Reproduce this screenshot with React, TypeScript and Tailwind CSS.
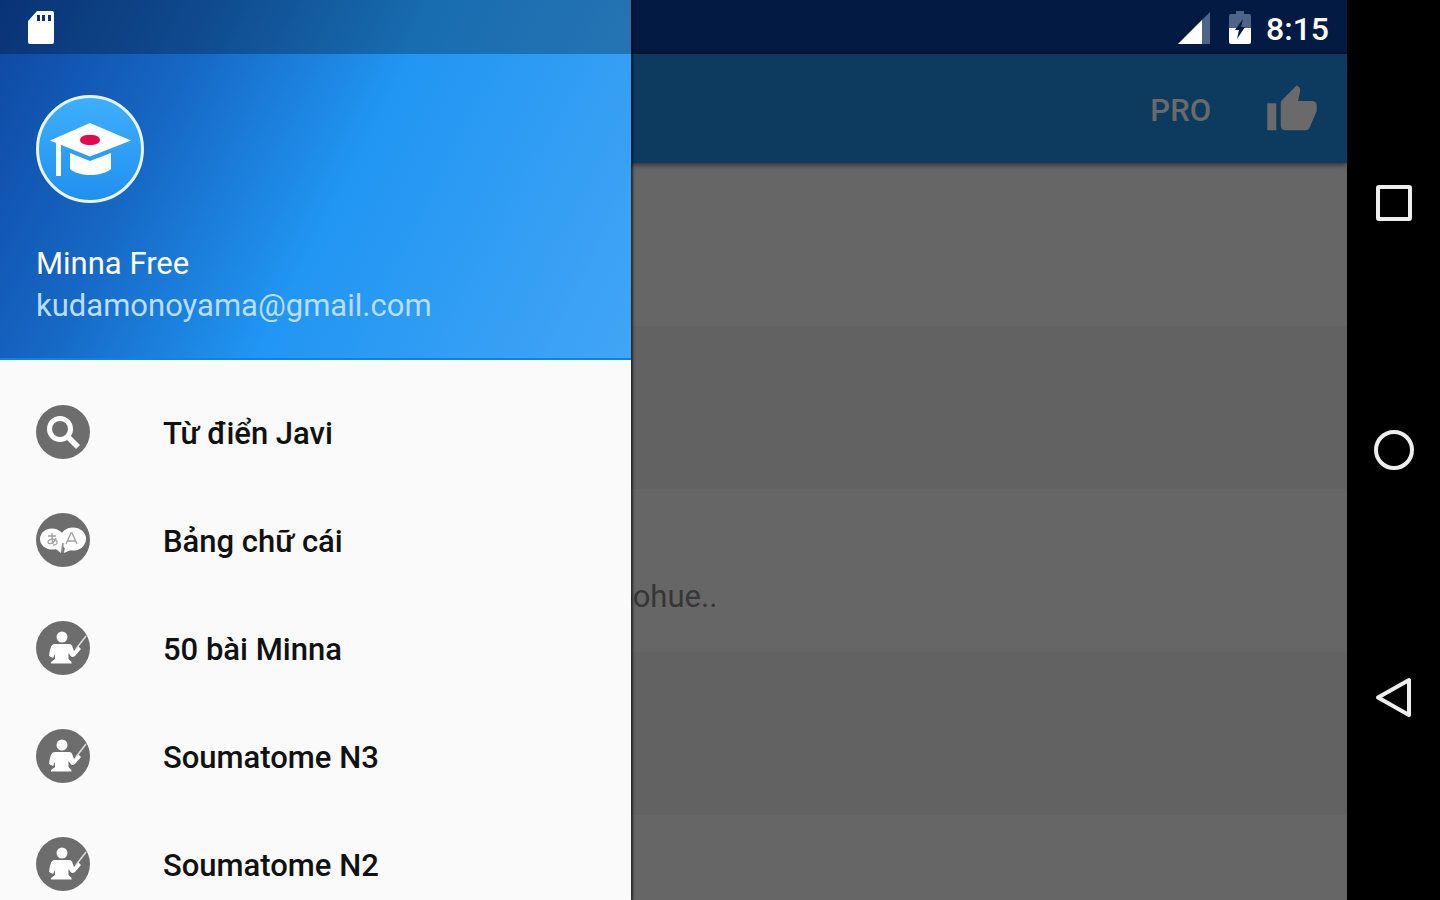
import React from "react";
import { MdThumbUp } from "react-icons/md";

type IconName = "search" | "alphabet" | "teacher";

interface MenuItem {
  id: string;
  label: string;
  icon: IconName;
}

const menuItems: MenuItem[] = [
  { id: "javi", label: "Từ điển Javi", icon: "search" },
  { id: "kana", label: "Bảng chữ cái", icon: "alphabet" },
  { id: "minna", label: "50 bài Minna", icon: "teacher" },
  { id: "n3", label: "Soumatome N3", icon: "teacher" },
  { id: "n2", label: "Soumatome N2", icon: "teacher" },
];

const rows = ["", "", "oohue..", "", ""];

const SearchIcon = () => (
  <svg viewBox="0 0 54 54" className="size-[54px]" aria-hidden="true">
    <circle cx="24" cy="24" r="10.5" fill="none" stroke="#fff" strokeWidth="5" />
    <path d="M32 32l10 10" stroke="#fff" strokeWidth="5.5" />
  </svg>
);

const AlphabetIcon = () => (
  <svg viewBox="0 0 54 54" className="size-[54px]" aria-hidden="true">
    <ellipse cx="16" cy="26" rx="12" ry="10.5" fill="#fff" />
    <ellipse cx="37" cy="26" rx="13" ry="11.5" fill="#fff" />
    <path d="M17 34l8 6 1-8zM29 33l-1 7 9-4z" fill="#fff" />
    <path d="M27 30q-1 4 0 10" fill="none" stroke="#8a8a8a" strokeWidth="1.5" />
    <g fill="none" stroke="#a3a3a3" strokeWidth="1.4">
      <path d="M12 23h8M16 20c0 4-.5 7 1 11M20 25c-2 6-8 7-8 4 0-4 10-4 9 1 0 1-2 2-4 2" />
      <path d="M30 31l5-11h1l5 11M32 28h7" />
    </g>
  </svg>
);

const TeacherIcon = () => (
  <svg viewBox="0 0 54 54" className="size-[54px]" aria-hidden="true">
    <circle cx="26" cy="16" r="5.5" fill="#fff" />
    <path
      d="M19 23h14c2 0 3 1 3.500 3l1.500 4 4-5 3 3-6 7c-2 2-4 1-5-1l-1.500-2v6l3 3v1.500H15V41l4-3v-5l-2 4-4-2c1-5 1-12 6-12z"
      fill="#fff"
    />
    <path d="M40 28l10-13" stroke="#ddd" strokeWidth="1.500" fill="none" />
  </svg>
);

const ItemIcon = ({ name }: { name: IconName }) => (
  <span className="flex size-[54px] shrink-0 items-center justify-center rounded-full bg-[#6d6d6d] text-white">
    {name === "search" && <SearchIcon />}
    {name === "alphabet" && <AlphabetIcon />}
    {name === "teacher" && <TeacherIcon />}
  </span>
);

const Avatar = () => (
  <svg viewBox="0 0 108 108" className="size-[108px]" role="img" aria-label="Minna">
    <defs>
      <linearGradient id="avatarFill" x1="0" y1="0" x2="0" y2="1">
        <stop offset="0" stopColor="#3fb0fd" />
        <stop offset="1" stopColor="#2090ee" />
      </linearGradient>
    </defs>
    <circle cx="54" cy="54" r="52.500" fill="url(#avatarFill)" stroke="#eaf4ff" strokeWidth="3" />
    <path d="M54 28L95 45.500 54 61.500 14 45.500z" fill="#fff" />
    <path d="M20 47h5v34h-5z" fill="#fff" />
    <path d="M34 58l20 8 21-8v16c-10 8-31 8-41 0z" fill="#fff" />
    <rect x="44" y="40" width="20" height="10" rx="8" ry="5" fill="#e6074f" />
  </svg>
);

const SdCardIcon = () => (
  <svg viewBox="0 0 28 34" className="h-[34px] w-7" aria-hidden="true">
    <path
      d="M10 0h15a2 2 0 0 1 2 2v29a2 2 0 0 1-2 2H3a2 2 0 0 1-2-2V10z"
      fill="#fff"
    />
    <path d="M10 4h3v6h-3zM15 4h3v6h-3zM21 4h3v6h-3z" fill="#0b3474" />
  </svg>
);

const SignalIcon = () => (
  <svg viewBox="0 0 32 32" className="size-8" aria-hidden="true">
    <path d="M32 0v32H0z" fill="#4d6587" />
    <path d="M24 8v24H0z" fill="#fff" />
  </svg>
);

const BatteryIcon = () => (
  <svg viewBox="0 0 24 34" className="h-[34px] w-6" aria-hidden="true">
    <path d="M8 0h8v3h5a2 2 0 0 1 2 2v12H1V5a2 2 0 0 1 2-2h5z" fill="#4d6587" />
    <path d="M1 17h22v14a2 2 0 0 1-2 2H3a2 2 0 0 1-2-2z" fill="#fff" />
    <path d="M15 8L7 19h4l-2 9 8-12h-4z" fill="#031a42" />
  </svg>
);

const Drawer = () => (
  <aside className="absolute inset-y-0 left-0 z-10 flex w-[631px] flex-col overflow-hidden bg-[#fafafa] shadow-[1px_0_2px_1px_rgba(0,0,0,0.6)]">
    <div className="border-b-2 border-[#0a84e8] bg-[linear-gradient(117deg,#0d47a1_0%,#1667c4_27%,#2196f3_54%,#42a5f5_100%)]">
      <div className="flex h-[54px] items-center bg-black/27 px-[27px] pt-[2px]">
        <SdCardIcon />
      </div>
      <div className="px-9 pt-[41px] pb-[31px]">
        <Avatar />
        <p className="mt-10 text-[31px] leading-[42px] text-white">Minna Free</p>
        <p className="text-[31px] leading-[42px] text-[#b9def9]">kudamonoyama@gmail.com</p>
      </div>
    </div>
    <nav className="pt-[18px]">
      <ul>
        {menuItems.map((item) => (
          <li key={item.id}>
            <a
              href={`#${item.id}`}
              className="flex h-[108px] items-center gap-[73px] px-9 text-[31px] font-medium text-[#111]"
            >
              <ItemIcon name={item.icon} />
              <span className="pt-[5px]">{item.label}</span>
            </a>
          </li>
        ))}
      </ul>
    </nav>
  </aside>
);

const SystemNav = () => (
  <nav className="flex w-[93px] shrink-0 flex-col bg-black py-20 text-[#eee]">
    <button aria-label="Recent apps" className="flex flex-1 items-center justify-center">
      <svg viewBox="0 0 40 40" className="size-10">
        <rect x="4" y="4" width="32" height="32" rx="1" fill="none" stroke="currentColor" strokeWidth="4" />
      </svg>
    </button>
    <button aria-label="Home" className="flex flex-1 items-center justify-center">
      <svg viewBox="0 0 40 40" className="size-10">
        <circle cx="20" cy="20" r="18" fill="none" stroke="currentColor" strokeWidth="4" />
      </svg>
    </button>
    <button aria-label="Back" className="flex flex-1 items-center justify-center">
      <svg viewBox="0 0 40 40" className="size-10">
        <path d="M35 3v35L4 20.500z" fill="none" stroke="currentColor" strokeWidth="4" strokeLinejoin="round" />
      </svg>
    </button>
  </nav>
);

const App: React.FC = () => {
  return (
    <div className="flex h-screen overflow-hidden bg-black font-[Roboto,sans-serif]">
      <div className="relative flex min-w-0 flex-1 flex-col overflow-hidden bg-[#666]">
        <div className="flex h-[54px] shrink-0 items-center justify-end border-b-2 border-[#03122f] bg-[#031a42] pt-1 pr-[18px] text-white">
          <SignalIcon />
          <span className="ml-[18px]">
            <BatteryIcon />
          </span>
          <span className="ml-[14px] pt-[2px] text-[32px] font-medium">8:15</span>
        </div>
        <header className="z-[1] flex h-[109px] shrink-0 items-center justify-end gap-[54px] bg-[#0d3b5f] pt-[2px] pr-7 text-[#6a6a6a] shadow-[0_2px_5px_rgba(0,0,0,0.5)]">
          <button className="pt-[3px] text-[31px] font-medium">PRO</button>
          <button aria-label="Like">
            <MdThumbUp className="size-[54px]" />
          </button>
        </header>
        <main>
          {rows.map((text, i) => (
            <div
              key={i}
              className="flex h-[163px] items-end pb-8 pl-[615px] text-[31px] text-[#363636] odd:bg-[#666] even:bg-[#626262] last:bg-[#646464]"
            >
              {text}
            </div>
          ))}
        </main>
        <Drawer />
      </div>
      <SystemNav />
    </div>
  );
};

export default App;
